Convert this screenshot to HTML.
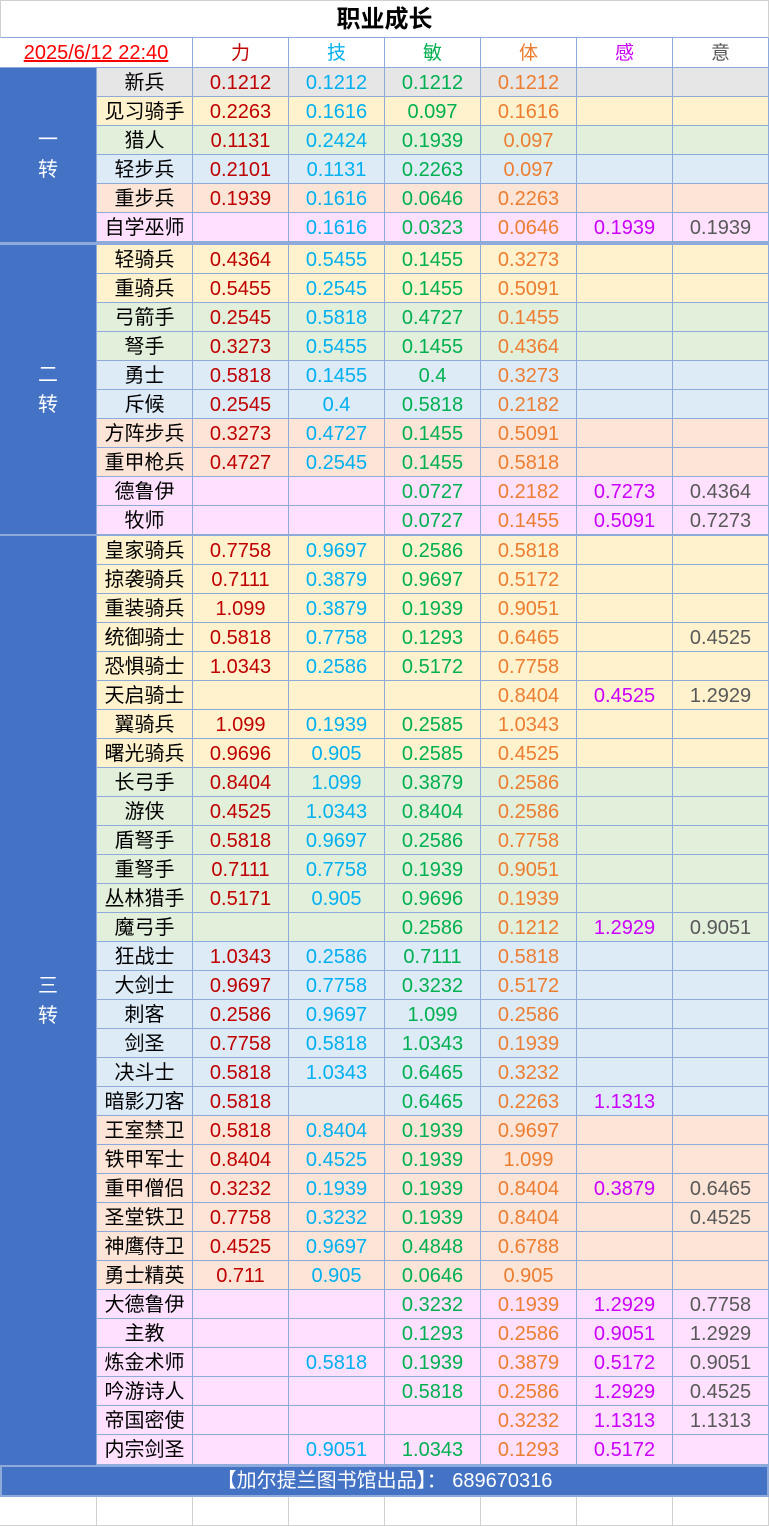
<!DOCTYPE html>
<html><head><meta charset="utf-8"><style>
*{margin:0;padding:0;box-sizing:border-box}
body{width:769px;height:1526px;background:#fff;font-family:"Liberation Sans","Noto Sans CJK SC",sans-serif;position:relative;overflow:hidden}
.title{position:absolute;left:0;top:0;width:769px;height:38px;border:1px solid #d0d0d0;border-bottom:1px solid #8eaadb;text-align:center;font-weight:bold;font-size:24px;line-height:37px;color:#000}
.hdr{position:absolute;left:0;top:38px;width:769px;height:30px;display:grid;grid-template-columns:193px repeat(6,96px);border-bottom:1px solid #8eaadb}
.hdr div{border-right:1px solid #8eaadb;text-align:center;font-size:19px;line-height:32px}
.hdr .date{color:#f00;text-decoration:underline;font-size:20px;line-height:30px}
.grp{position:absolute;left:0;width:97px;background:#4472c4;color:#fff;font-size:20px;text-align:center;display:flex;align-items:center;justify-content:center;line-height:30px;border-right:1px solid #8eaadb}
.row{position:absolute;left:97px;width:672px;height:29px;display:grid;grid-template-columns:repeat(7,96px);border-bottom:1px solid #8eaadb}
.row div{border-right:1px solid #8eaadb;text-align:center;font-size:20px;line-height:31px;white-space:nowrap;overflow:visible}
.row div:first-child{color:#000;line-height:30px}
.row div:nth-child(2){color:#c00000}
.row div:nth-child(3){color:#00b0f0}
.row div:nth-child(4){color:#00b050}
.row div:nth-child(5){color:#ed7d31}
.row div:nth-child(6){color:#cc00ff}
.row div:nth-child(7){color:#595959}
.g{background:#e7e6e6}.y{background:#fff2cc}.n{background:#e2efda}.b{background:#ddebf7}.o{background:#fce4d6}.p{background:#ffe1ff}
.sep{position:absolute;left:0;width:769px;background:#8eaadb}
.foot{position:absolute;left:0;top:1465px;width:769px;height:32px;background:#4472c4;border:2px solid #8eaadb;color:#fff;text-align:center;font-size:20px;line-height:29px}
.empty{position:absolute;left:0;top:1497px;width:769px;height:29px;display:grid;grid-template-columns:97px repeat(7,96px);border-bottom:1px solid #d0d0d0}
.empty div{border-right:1px solid #d0d0d0}
</style></head><body>
<div class="title">职业成长</div>
<div class="hdr"><div class="date">2025/6/12 22:40</div><div style="color:#c00000">力</div><div style="color:#00b0f0">技</div><div style="color:#00b050">敏</div><div style="color:#ed7d31">体</div><div style="color:#cc00ff">感</div><div style="color:#595959">意</div></div>

<div class="grp" style="top:68px;height:174px">一<br>转</div>
<div class="grp" style="top:245px;height:290px">二<br>转</div>
<div class="grp" style="top:536px;height:929px">三<br>转</div>

<div class="row g" style="top:68px"><div>新兵</div><div>0.1212</div><div>0.1212</div><div>0.1212</div><div>0.1212</div><div></div><div></div></div>
<div class="row y" style="top:97px"><div>见习骑手</div><div>0.2263</div><div>0.1616</div><div>0.097</div><div>0.1616</div><div></div><div></div></div>
<div class="row n" style="top:126px"><div>猎人</div><div>0.1131</div><div>0.2424</div><div>0.1939</div><div>0.097</div><div></div><div></div></div>
<div class="row b" style="top:155px"><div>轻步兵</div><div>0.2101</div><div>0.1131</div><div>0.2263</div><div>0.097</div><div></div><div></div></div>
<div class="row o" style="top:184px"><div>重步兵</div><div>0.1939</div><div>0.1616</div><div>0.0646</div><div>0.2263</div><div></div><div></div></div>
<div class="row p" style="top:213px"><div>自学巫师</div><div></div><div>0.1616</div><div>0.0323</div><div>0.0646</div><div>0.1939</div><div>0.1939</div></div>
<div class="sep" style="top:242px;height:3px"></div>

<div class="row y" style="top:245px"><div>轻骑兵</div><div>0.4364</div><div>0.5455</div><div>0.1455</div><div>0.3273</div><div></div><div></div></div>
<div class="row y" style="top:274px"><div>重骑兵</div><div>0.5455</div><div>0.2545</div><div>0.1455</div><div>0.5091</div><div></div><div></div></div>
<div class="row n" style="top:303px"><div>弓箭手</div><div>0.2545</div><div>0.5818</div><div>0.4727</div><div>0.1455</div><div></div><div></div></div>
<div class="row n" style="top:332px"><div>弩手</div><div>0.3273</div><div>0.5455</div><div>0.1455</div><div>0.4364</div><div></div><div></div></div>
<div class="row b" style="top:361px"><div>勇士</div><div>0.5818</div><div>0.1455</div><div>0.4</div><div>0.3273</div><div></div><div></div></div>
<div class="row b" style="top:390px"><div>斥候</div><div>0.2545</div><div>0.4</div><div>0.5818</div><div>0.2182</div><div></div><div></div></div>
<div class="row o" style="top:419px"><div>方阵步兵</div><div>0.3273</div><div>0.4727</div><div>0.1455</div><div>0.5091</div><div></div><div></div></div>
<div class="row o" style="top:448px"><div>重甲枪兵</div><div>0.4727</div><div>0.2545</div><div>0.1455</div><div>0.5818</div><div></div><div></div></div>
<div class="row p" style="top:477px"><div>德鲁伊</div><div></div><div></div><div>0.0727</div><div>0.2182</div><div>0.7273</div><div>0.4364</div></div>
<div class="row p" style="top:506px"><div>牧师</div><div></div><div></div><div>0.0727</div><div>0.1455</div><div>0.5091</div><div>0.7273</div></div>
<div class="sep" style="top:534px;height:2px"></div>

<div class="row y" style="top:536px"><div>皇家骑兵</div><div>0.7758</div><div>0.9697</div><div>0.2586</div><div>0.5818</div><div></div><div></div></div>
<div class="row y" style="top:565px"><div>掠袭骑兵</div><div>0.7111</div><div>0.3879</div><div>0.9697</div><div>0.5172</div><div></div><div></div></div>
<div class="row y" style="top:594px"><div>重装骑兵</div><div>1.099</div><div>0.3879</div><div>0.1939</div><div>0.9051</div><div></div><div></div></div>
<div class="row y" style="top:623px"><div>统御骑士</div><div>0.5818</div><div>0.7758</div><div>0.1293</div><div>0.6465</div><div></div><div>0.4525</div></div>
<div class="row y" style="top:652px"><div>恐惧骑士</div><div>1.0343</div><div>0.2586</div><div>0.5172</div><div>0.7758</div><div></div><div></div></div>
<div class="row y" style="top:681px"><div>天启骑士</div><div></div><div></div><div></div><div>0.8404</div><div>0.4525</div><div>1.2929</div></div>
<div class="row y" style="top:710px"><div>翼骑兵</div><div>1.099</div><div>0.1939</div><div>0.2585</div><div>1.0343</div><div></div><div></div></div>
<div class="row y" style="top:739px"><div>曙光骑兵</div><div>0.9696</div><div>0.905</div><div>0.2585</div><div>0.4525</div><div></div><div></div></div>
<div class="row n" style="top:768px"><div>长弓手</div><div>0.8404</div><div>1.099</div><div>0.3879</div><div>0.2586</div><div></div><div></div></div>
<div class="row n" style="top:797px"><div>游侠</div><div>0.4525</div><div>1.0343</div><div>0.8404</div><div>0.2586</div><div></div><div></div></div>
<div class="row n" style="top:826px"><div>盾弩手</div><div>0.5818</div><div>0.9697</div><div>0.2586</div><div>0.7758</div><div></div><div></div></div>
<div class="row n" style="top:855px"><div>重弩手</div><div>0.7111</div><div>0.7758</div><div>0.1939</div><div>0.9051</div><div></div><div></div></div>
<div class="row n" style="top:884px"><div>丛林猎手</div><div>0.5171</div><div>0.905</div><div>0.9696</div><div>0.1939</div><div></div><div></div></div>
<div class="row n" style="top:913px"><div>魔弓手</div><div></div><div></div><div>0.2586</div><div>0.1212</div><div>1.2929</div><div>0.9051</div></div>
<div class="row b" style="top:942px"><div>狂战士</div><div>1.0343</div><div>0.2586</div><div>0.7111</div><div>0.5818</div><div></div><div></div></div>
<div class="row b" style="top:971px"><div>大剑士</div><div>0.9697</div><div>0.7758</div><div>0.3232</div><div>0.5172</div><div></div><div></div></div>
<div class="row b" style="top:1000px"><div>刺客</div><div>0.2586</div><div>0.9697</div><div>1.099</div><div>0.2586</div><div></div><div></div></div>
<div class="row b" style="top:1029px"><div>剑圣</div><div>0.7758</div><div>0.5818</div><div>1.0343</div><div>0.1939</div><div></div><div></div></div>
<div class="row b" style="top:1058px"><div>决斗士</div><div>0.5818</div><div>1.0343</div><div>0.6465</div><div>0.3232</div><div></div><div></div></div>
<div class="row b" style="top:1087px"><div>暗影刀客</div><div>0.5818</div><div></div><div>0.6465</div><div>0.2263</div><div>1.1313</div><div></div></div>
<div class="row o" style="top:1116px"><div>王室禁卫</div><div>0.5818</div><div>0.8404</div><div>0.1939</div><div>0.9697</div><div></div><div></div></div>
<div class="row o" style="top:1145px"><div>铁甲军士</div><div>0.8404</div><div>0.4525</div><div>0.1939</div><div>1.099</div><div></div><div></div></div>
<div class="row o" style="top:1174px"><div>重甲僧侣</div><div>0.3232</div><div>0.1939</div><div>0.1939</div><div>0.8404</div><div>0.3879</div><div>0.6465</div></div>
<div class="row o" style="top:1203px"><div>圣堂铁卫</div><div>0.7758</div><div>0.3232</div><div>0.1939</div><div>0.8404</div><div></div><div>0.4525</div></div>
<div class="row o" style="top:1232px"><div>神鹰侍卫</div><div>0.4525</div><div>0.9697</div><div>0.4848</div><div>0.6788</div><div></div><div></div></div>
<div class="row o" style="top:1261px"><div>勇士精英</div><div>0.711</div><div>0.905</div><div>0.0646</div><div>0.905</div><div></div><div></div></div>
<div class="row p" style="top:1290px"><div>大德鲁伊</div><div></div><div></div><div>0.3232</div><div>0.1939</div><div>1.2929</div><div>0.7758</div></div>
<div class="row p" style="top:1319px"><div>主教</div><div></div><div></div><div>0.1293</div><div>0.2586</div><div>0.9051</div><div>1.2929</div></div>
<div class="row p" style="top:1348px"><div>炼金术师</div><div></div><div>0.5818</div><div>0.1939</div><div>0.3879</div><div>0.5172</div><div>0.9051</div></div>
<div class="row p" style="top:1377px"><div>吟游诗人</div><div></div><div></div><div>0.5818</div><div>0.2586</div><div>1.2929</div><div>0.4525</div></div>
<div class="row p" style="top:1406px"><div>帝国密使</div><div></div><div></div><div></div><div>0.3232</div><div>1.1313</div><div>1.1313</div></div>
<div class="row p" style="top:1435px;height:30px"><div>内宗剑圣</div><div></div><div>0.9051</div><div>1.0343</div><div>0.1293</div><div>0.5172</div><div></div></div>

<div class="foot">【加尔提兰图书馆出品】：&nbsp;689670316</div>
<div class="empty"><div></div><div></div><div></div><div></div><div></div><div></div><div></div><div></div></div>
</body></html>
